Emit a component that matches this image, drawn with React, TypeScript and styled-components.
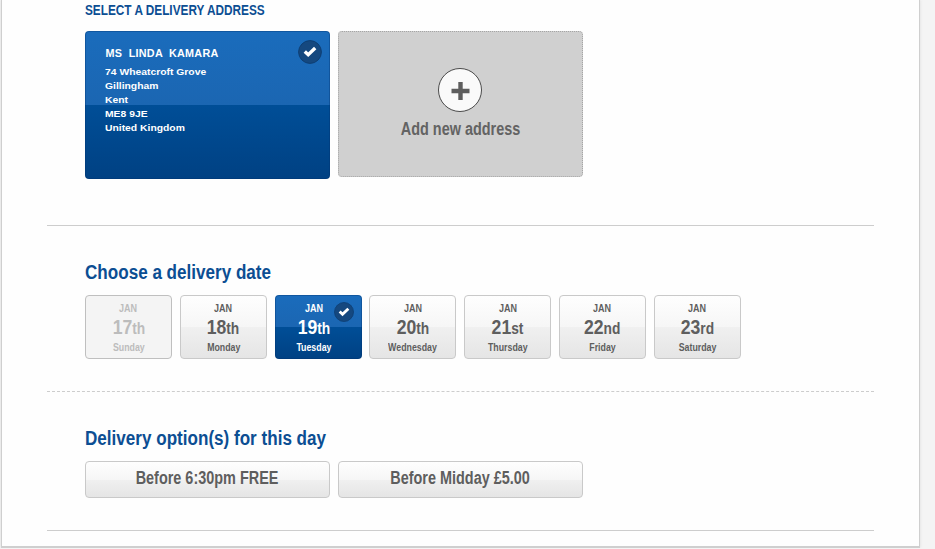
import React from 'react';
import styled, { createGlobalStyle, css } from 'styled-components';

const GlobalStyle = createGlobalStyle`
  *, *::before, *::after { box-sizing: border-box; }
  body {
    margin: 0;
    background: #f4f4f4;
    font-family: "Liberation Sans", Arial, sans-serif;
    overflow: hidden;
  }
  h2, h3, p { margin: 0; }
`;

const blueFill = css`
  background: linear-gradient(#1a6cbc 0, #1b66b2 50%, #004e97 50%, #004183 100%) border-box;
  border: 1px solid rgba(0, 50, 110, 0.35);
  color: #fff;
`;

const greyFill = css`
  background: linear-gradient(#fefefe 0, #f6f6f6 50%, #f0f0f0 50%, #e5e5e5 100%);
  border: 1px solid #c9c9c9;
  color: #5e5e5e;
`;

const Sheet = styled.main`
  width: 919px;
  height: 548px;
  margin-left: 1px;
  padding: 0 45px;
  background: #fefefe;
  border: solid #cfcfcf;
  border-width: 0 1px 2px;
  box-shadow: 0 0 3px #ddd;
`;

const Section = styled.section<{ $height: number; $line?: string }>`
  display: flex;
  flex-direction: column;
  width: 827px;
  height: ${p => p.$height}px;
  padding-left: 38px;
  border-bottom: 1px ${p => p.$line ?? 'solid'} #cdcdcd;
`;

/* Narrow lettering: squeezes the face horizontally around the given origin. */
const Condensed = styled.span<{ $k: number; $from?: string }>`
  display: inline-block;
  white-space: nowrap;
  transform: scaleX(${p => p.$k});
  transform-origin: ${p => p.$from ?? 'center'} center;
`;

const Title = styled.h2`
  height: 31px;
  font-size: 14px;
  line-height: 20px;
  color: #0c4e93;
`;

const Heading = styled.h3`
  padding-top: 34px;
  height: 69px;
  font-size: 20px;
  line-height: 24px;
  color: #0c4e93;
`;

const Row = styled.div<{ $gap: number }>`
  display: flex;
  align-items: flex-start;
  gap: ${p => p.$gap}px;
`;

const AddressCard = styled.article`
  ${blueFill}
  position: relative;
  width: 245px;
  height: 148px;
  padding: 14px 19px;
  border-radius: 4px;
  font-size: 9.6px;
  font-weight: bold;
  line-height: 14px;
`;

const AddressLine = styled.p`
  transform: scaleX(1.078);
  transform-origin: left center;
`;

const Name = styled.p`
  margin-bottom: 4px;
  padding-left: 0.5px;
  font-size: 10.8px;
  line-height: 15px;
  letter-spacing: 0.25px;
  white-space: pre;
`;

const AddCard = styled.button`
  display: flex;
  flex-direction: column;
  align-items: center;
  width: 245px;
  height: 146px;
  padding: 36px 0 0;
  border: 1px dotted #a5a5a5;
  border-radius: 4px;
  background: #d0d0d0;
  color: #636363;
  font: bold 18px/22px "Liberation Sans", Arial, sans-serif;
`;

const PlusCircle = styled.svg`
  flex: none;
  width: 44px;
  height: 44px;
  margin: 0 1px 6px 0;
`;

const Dates = styled.div`
  display: grid;
  grid-template-columns: repeat(7, 87px);
  column-gap: 7.8px;
`;

const DateTile = styled.button<{ $state?: string }>`
  position: relative;
  display: flex;
  flex-direction: column;
  align-items: center;
  height: 64px;
  padding: 5px 0 0;
  border-radius: 4px;
  font: bold 11px/14px "Liberation Sans", Arial, sans-serif;
  ${greyFill}
  ${p => p.$state === 'selected' && css`
    ${blueFill}
    padding-right: 8px;
  `}
  ${p => p.$state === 'disabled' && css`
    background: #f4f4f4;
    color: #bcbcbc;
    border-color: #bfbfbf;
  `}
`;

const Day = styled(Condensed)`
  font-size: 20.5px;
  line-height: 23px;
  small { font-size: 16px; }
`;

const Tick = styled.svg<{ $size: number; $top: number; $right: number }>`
  position: absolute;
  top: ${p => p.$top}px;
  right: ${p => p.$right}px;
  width: ${p => p.$size}px;
  height: ${p => p.$size}px;
`;

const Option = styled.button`
  ${greyFill}
  width: 245px;
  height: 37px;
  padding: 0 0 4px;
  border-radius: 4px;
  font: bold 18px/22px "Liberation Sans", Arial, sans-serif;
`;

const Check = (p: { size: number; top: number; right: number }) => (
  <Tick viewBox="0 0 24 24" $size={p.size} $top={p.top} $right={p.right}>
    <circle cx="12" cy="12" r="11.4" fill="#15487f" stroke="#0e3f74" strokeWidth="1" />
    <path d="M6.8 11.5l3.4 3.2 7-6.7" fill="none" stroke="#fff" strokeWidth="3.4" />
  </Tick>
);

const address = ['74 Wheatcroft Grove', 'Gillingham', 'Kent', 'ME8 9JE', 'United Kingdom'];

const days = [
  { n: 17, s: 'th', day: 'Sunday', state: 'disabled' },
  { n: 18, s: 'th', day: 'Monday' },
  { n: 19, s: 'th', day: 'Tuesday', state: 'selected' },
  { n: 20, s: 'th', day: 'Wednesday' },
  { n: 21, s: 'st', day: 'Thursday' },
  { n: 22, s: 'nd', day: 'Friday' },
  { n: 23, s: 'rd', day: 'Saturday' },
];

export default function App() {
  return (
    <>
      <GlobalStyle />
      <Sheet>
        <Section $height={226}>
          <Title><Condensed $k={0.843} $from="left">SELECT A DELIVERY ADDRESS</Condensed></Title>
          <Row $gap={8}>
            <AddressCard>
              <Name>{'MS  LINDA  KAMARA'}</Name>
              {address.map(line => <AddressLine key={line}>{line}</AddressLine>)}
              <Check size={24} top={8} right={7} />
            </AddressCard>
            <AddCard>
              <PlusCircle viewBox="0 0 44 44">
                <circle cx="22" cy="22" r="21.5" fill="#fafafa" stroke="#4a4a4a" />
                <path d="M22.5 14v18M13.5 23h18" stroke="#5e5e5e" strokeWidth="4.4" />
              </PlusCircle>
              <Condensed $k={0.802}>Add new address</Condensed>
            </AddCard>
          </Row>
        </Section>
        <Section $height={166} $line="dashed">
          <Heading><Condensed $k={0.854} $from="left">Choose a delivery date</Condensed></Heading>
          <Dates>
            {days.map(d => (
              <DateTile key={d.n} $state={d.state} disabled={d.state === 'disabled'}>
                <Condensed $k={0.82}>JAN</Condensed>
                <Day $k={0.86}>{d.n}<small>{d.s}</small></Day>
                <Condensed $k={0.8}>{d.day}</Condensed>
                {d.state === 'selected' && <Check size={20} top={6} right={7} />}
              </DateTile>
            ))}
          </Dates>
        </Section>
        <Section $height={139}>
          <Heading><Condensed $k={0.854} $from="left">Delivery option(s) for this day</Condensed></Heading>
          <Row $gap={8}>
            <Option><Condensed $k={0.802}>Before 6:30pm FREE</Condensed></Option>
            <Option><Condensed $k={0.802}>Before Midday £5.00</Condensed></Option>
          </Row>
        </Section>
      </Sheet>
    </>
  );
}
